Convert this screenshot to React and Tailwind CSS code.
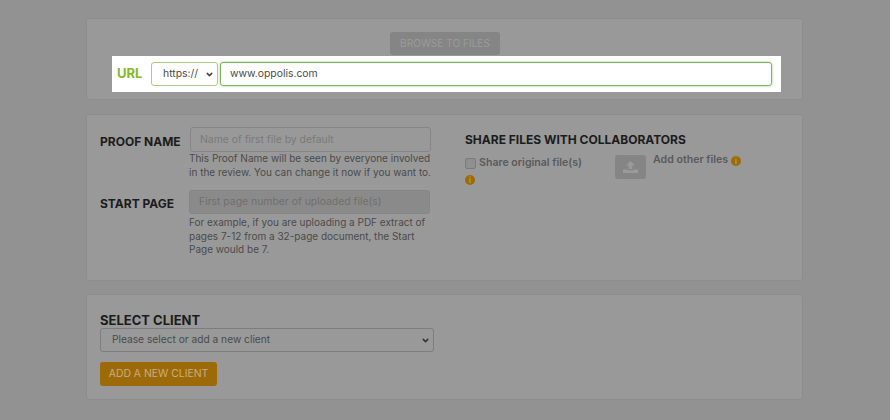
import React from "react";
import { ChevronDown } from "lucide-react";

const font = "font-['Inter','Liberation_Sans',sans-serif]";

function InfoDot({ className = "" }) {
  return (
    <span className={`inline-flex h-[10px] w-[10px] items-center justify-center rounded-full bg-[#a06b00] text-[8px] leading-none font-bold text-[#999999] ${className}`}>
      i
    </span>
  );
}

function Label({ children, className = "" }) {
  return <div className={`leading-none font-bold whitespace-nowrap text-[#1c1c1c] ${className}`}>{children}</div>;
}

function Help({ children }) {
  return <p className="ml-[89px] text-[10px] leading-[13.5px] whitespace-nowrap text-[#4b4b4b]">{children}</p>;
}

export default function App() {
  return (
    <div className={`h-[420px] w-[890px] overflow-hidden bg-[#929292] pt-[18px] pr-[87px] pl-[86px] ${font}`}>
      {/* upload card */}
      <section className="flex h-[82px] flex-col rounded-[3px] border border-[#8d8d8d] bg-[#999999] pt-[13px]">
        <button className="ml-[303px] h-[23px] w-[110px] rounded-[3px] bg-[#858585] text-[10.1px] text-[#9b9b9b]">
          BROWSE TO FILES
        </button>
        <div className="mt-[1px] ml-[25px] flex h-[36px] w-[669px] items-center bg-white pl-[5px]">
          <span className="w-[34px] text-[13px] font-bold text-[#84b82e]">URL</span>
          <div className="flex h-[24px] w-[67px] items-center justify-between rounded-[3px] border border-[#a9cf78] pr-[3px] pl-[11px] text-[10.4px] text-[#4a4a4a]">
            https://
            <ChevronDown size={9} strokeWidth={4} className="text-[#444444]" />
          </div>
          <div className="ml-[2px] flex h-[24px] w-[552px] items-center rounded-[3px] border border-[#7fb05a] pl-[9px] text-[10.4px] text-[#4a4a4a] shadow-[0_0_3px_#a9d08a]">
            www.oppolis.com
          </div>
        </div>
      </section>

      {/* proof details */}
      <section className="mt-[14px] flex h-[167px] rounded-[3px] border border-[#8d8d8d] bg-[#999999] pt-[12px] pl-[13px]">
        <div className="w-[365px]">
          <div className="flex items-center">
            <Label className="mt-[4px] w-[90px] text-[12px]">PROOF NAME</Label>
            <div className="flex h-[25px] w-[241px] items-center rounded-[3px] border border-[#858585] pl-[9px] text-[10.4px] text-[#7a7a7a]">
              Name of first file by default
            </div>
          </div>
          <Help>
            This Proof Name will be seen by everyone involved
            <br />
            in the review. You can change it now if you want to.
          </Help>
          <div className="mt-[11px] flex items-center">
            <Label className="mt-[4px] w-[89px] text-[12px]">START PAGE</Label>
            <div className="flex h-[24px] w-[241px] items-center rounded-[3px] border border-[#858585] bg-[#8a8a8a] pl-[9px] text-[10.4px] text-[#6f6f6f]">
              First page number of uploaded file(s)
            </div>
          </div>
          <div className="mt-[2px]">
            <Help>
              For example, if you are uploading a PDF extract of
              <br />
              pages 7-12 from a 32-page document, the Start
              <br />
              Page would be 7.
            </Help>
          </div>
        </div>
        <div>
          <Label className="mt-[7px] text-[12px]">SHARE FILES WITH COLLABORATORS</Label>
          <div className="mt-[9px] flex">
            <div className="flex w-[150px] flex-col items-start">
              <div className="flex items-center gap-[3px] pt-[3px]">
                <span className="h-[11px] w-[11px] rounded-[2px] border border-[#7b7b7b] bg-[#8f8f8f]" />
                <span className="text-[10.6px] leading-none font-semibold text-[#5a5a5a]">Share original file(s)</span>
              </div>
              <InfoDot className="mt-[6px]" />
            </div>
            <div className="flex h-[24px] w-[31px] items-center justify-center rounded-[3px] bg-[#858585]">
              <svg width="15" height="12" viewBox="0 0 15 12" className="text-[#9b9b9b]" fill="currentColor">
                <path d="M7.5 0 12 4.4H9.3V8H5.7V4.4H3z" />
                <path d="M0 8.6h4.6v.9h5.8v-.9H15V12H0z" />
              </svg>
            </div>
            <div className="ml-[7px] flex h-[11px] items-center gap-[3px]">
              <span className="text-[10.6px] leading-none font-semibold text-[#5a5a5a]">Add other files</span>
              <InfoDot />
            </div>
          </div>
        </div>
      </section>

      {/* client */}
      <section className="mt-[13px] h-[106px] rounded-[3px] border border-[#8d8d8d] bg-[#999999] pt-[19px] pl-[13px]">
        <Label className="text-[13px]">SELECT CLIENT</Label>
        <div className="mt-[1px] flex h-[24px] w-[334px] items-center justify-between rounded-[3px] border border-[#7d7d7d] pr-[3px] pl-[11px] text-[10.2px] text-[#4a4a4a]">
          Please select or add a new client
          <ChevronDown size={9} strokeWidth={4} className="text-[#333333]" />
        </div>
        <button className="mt-[10px] h-[24px] w-[117px] rounded-[3px] bg-[#9c6a08] text-[10.4px] text-[#c9ad80]">
          ADD A NEW CLIENT
        </button>
      </section>
    </div>
  );
}
